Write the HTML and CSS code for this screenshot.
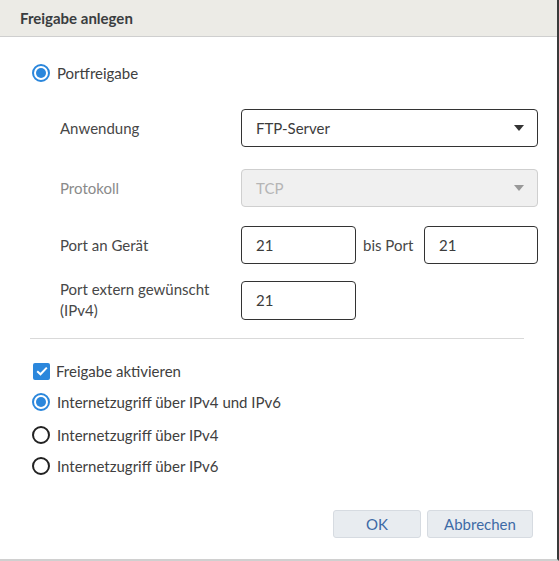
FILE: index.html
```html
<!DOCTYPE html>
<html lang="de">
<head>
<meta charset="utf-8">
<title>Freigabe anlegen</title>
<link rel="stylesheet" href="styles.css">
</head>
<body>
<div class="dialog">
  <div class="header">Freigabe anlegen</div>
  <div class="content">
    <div class="option option-main"><span class="radio checked"></span><span>Portfreigabe</span></div>
    <div class="form">
      <div class="row row-1">
        <div class="label">Anwendung</div>
        <div class="select"><span>FTP-Server</span><span class="caret"></span></div>
      </div>
      <div class="row row-2">
        <div class="label disabled">Protokoll</div>
        <div class="select is-disabled"><span>TCP</span><span class="caret"></span></div>
      </div>
      <div class="row row-3">
        <div class="label">Port an Gerät</div>
        <div class="ports">
          <div class="input">21</div>
          <span class="bis">bis Port</span>
          <div class="input input-end">21</div>
        </div>
      </div>
      <div class="row row-4">
        <div class="label">Port extern gewünscht (IPv4)</div>
        <div class="input">21</div>
      </div>
    </div>
    <div class="divider"></div>
    <div class="option opt-check"><span class="checkbox"><svg width="12" height="10" viewBox="0 0 12 10"><path d="M1.2 5.2 L4.5 8.3 L10.8 1.6" fill="none" stroke="#fff" stroke-width="2"/></svg></span><span>Freigabe aktivieren</span></div>
    <div class="option opt-r1"><span class="radio checked"></span><span>Internetzugriff über IPv4 und IPv6</span></div>
    <div class="option opt-r2"><span class="radio"></span><span>Internetzugriff über IPv4</span></div>
    <div class="option opt-r3"><span class="radio"></span><span>Internetzugriff über IPv6</span></div>
    <div class="actions">
      <button class="btn btn-ok">OK</button>
      <button class="btn btn-cancel">Abbrechen</button>
    </div>
  </div>
</div>
</body>
</html>
```
FILE: styles.css
```css
* { box-sizing: border-box; }
html, body { margin: 0; padding: 0; background: #fff; }
body {
  font-family: "Lato", "Open Sans", sans-serif;
  font-size: 15px;
  color: #3c3c3c;
}
.dialog {
  width: 559px;
  height: 561px;
  border-right: 2px solid #3a3a3a;
  border-bottom: 2px solid #d0d0d0;
  background: #fff;
}
.header {
  height: 37px;
  background: #ecebe6;
  border-bottom: 1px solid #cfcfcf;
  padding: 0 0 0 20px;
  line-height: 36px;
  font-weight: 700;
  color: #3a3d40;
}
.content { padding: 0 0 0 32px; }
.option {
  display: flex;
  align-items: center;
  height: 20px;
  gap: 7px;
  color: #404040;
}
.option-main { margin-top: 26px; }
.radio {
  width: 18px;
  height: 18px;
  border-radius: 50%;
  border: 2px solid #222;
  flex: none;
  position: relative;
}
.radio.checked { border-color: #2b87dc; }
.radio.checked::after {
  content: "";
  position: absolute;
  left: 2px; top: 2px;
  width: 10px; height: 10px;
  border-radius: 50%;
  background: #2b87dc;
}
.checkbox {
  width: 17px; height: 17px;
  background: #2b87dc;
  border-radius: 2px;
  flex: none;
  display: flex;
  align-items: center;
  justify-content: center;
  margin-left: 1px;
  margin-right: -1px;
}
.form { padding-left: 28px; width: 506px; }
.row {
  display: grid;
  grid-template-columns: 181px 1fr;
  align-items: center;
}
.row-1 { margin-top: 26px; }
.row-2 { margin-top: 22px; }
.row-3 { margin-top: 19px; }
.row-4 { margin-top: 15px; }
.label { color: #474747; line-height: 21px; padding-right: 10px; }
.label.disabled { color: #8a8a8a; }
.select {
  height: 38px;
  width: 297px;
  border: 1px solid #333;
  border-radius: 4px;
  display: flex;
  align-items: center;
  justify-content: space-between;
  padding: 0 13px 0 14px;
  color: #3c3c3c;
}
.select.is-disabled {
  background: #f0f0f0;
  border-color: #cfcfcf;
  color: #b5b5b5;
}
.caret {
  width: 0; height: 0;
  border-left: 5.5px solid transparent;
  border-right: 5.5px solid transparent;
  border-top: 6px solid #333;
}
.is-disabled .caret { border-top-color: #999; }
.ports { display: flex; align-items: center; }
.input {
  width: 115px;
  height: 38px;
  border: 1px solid #333;
  border-radius: 4px;
  padding: 0 14px;
  display: flex;
  align-items: center;
  color: #3c3c3c;
}
.input-end { width: 114px; }
.bis { width: 68px; padding-left: 7px; color: #474747; }
.row-4 .input { height: 39px; }
.divider {
  margin-top: 17px;
  width: 494px;
  margin-left: -2px;
  height: 1px;
  background: #d9d9d9;
}
.opt-check { margin-top: 22px; }
.opt-r1 { margin-top: 11px; }
.opt-r2 { margin-top: 13px; }
.opt-r3 { margin-top: 11px; }
.actions {
  display: flex;
  gap: 6px;
  margin-top: 34px;
  padding-left: 301px;
}
.btn {
  font-family: inherit;
  font-size: 15px;
  height: 28px;
  background: #e8ecf0;
  border: 1px solid #d6dbe1;
  border-radius: 3px;
  color: #3d6aa6;
  padding: 0;
}
.btn-ok { width: 88px; }
.btn-cancel { width: 106px; }
```
